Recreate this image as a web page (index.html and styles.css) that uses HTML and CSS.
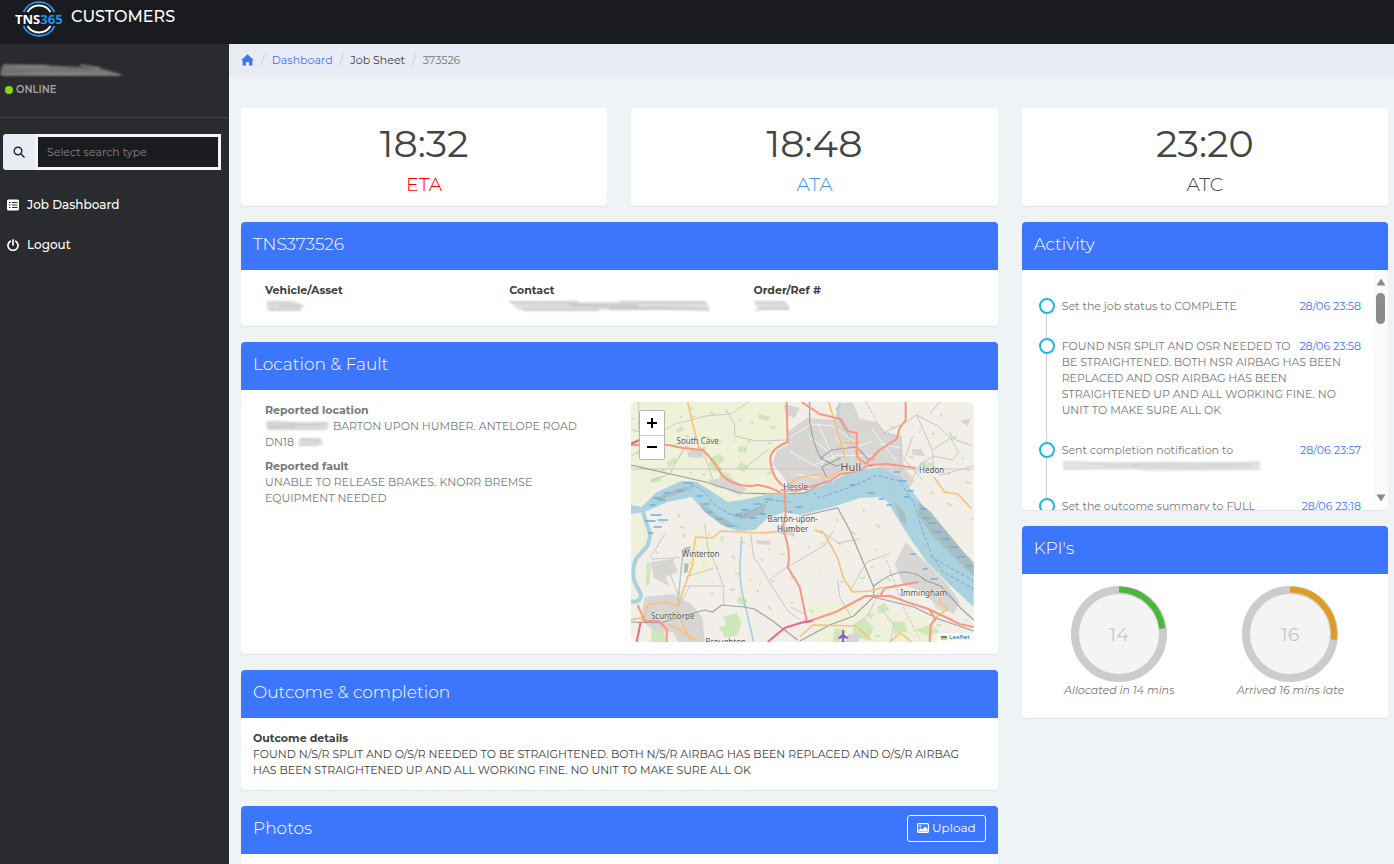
FILE: index.html
```html
<!doctype html>
<html lang="en">
<head>
    <meta charset="UTF-8">
    <meta name="viewport" content="width=device-width, initial-scale=1.0">
    <title>TNS365 Customers - Job Sheet</title>
    <link rel="stylesheet" href="styles.css">
</head>
<body>
    <header class="topbar">
        <svg class="logo" viewBox="0 0 48 38" role="img" aria-label="TNS365">
            <g fill="none" stroke-width="1.900">
                <path d="M8.500 12A17 17 0 0 1 39.500 12M8.500 26A17 17 0 0 0 39.500 26" stroke="#1b95ec"/>
                <path d="M12.500 12A13.500 13.500 0 0 1 35.500 12M12.500 26A13.500 13.500 0 0 0 35.500 26" stroke="#fff"/>
            </g>
            <text x="0" y="24" class="logo-text">TNS<tspan fill="#1b95ec">365</tspan></text>
        </svg>
        <span class="brand">CUSTOMERS</span>
    </header>

    <div class="layout">
        <aside class="sidebar">
            <div class="user">
                <svg class="smudge smudge--dark" width="126" height="14" viewBox="0 0 126 14" preserveAspectRatio="none">
                    <path d="M2 2L40 1L100 4L124 11L60 12L0 11Z" fill="#6e6f71"/>
                    <path d="M3 1L48 2M80 1L100 4M2 11Q60 10 120 11" stroke="#b5b5b5" fill="none"/>
                    <path d="M4 5L70 4M30 8L110 8" stroke="#8a8a8a" fill="none"/>
                </svg>
                <p class="status"><span class="status-dot"></span>ONLINE</p>
            </div>

            <form class="search">
                <button type="button" class="search-btn" aria-label="Search">
                    <svg width="12" height="12" viewBox="0 0 12 12" fill="none" stroke="#1f2a37" stroke-width="1.500"><circle cx="5" cy="5" r="3.800"/><path d="M7.800 7.800L11.500 11.500"/></svg>
                </button>
                <input type="text" class="search-input" placeholder="Select search type" aria-label="Select search type">
            </form>

            <nav class="menu">
                <a href="#" class="menu-link">
                    <svg width="12" height="12" viewBox="0 0 12 12"><rect y="0.500" width="12" height="11" rx="1.500" fill="#fff"/><path d="M2 3.500h1.500M2 6h1.500M2 8.500h1.500M5 3.500h5.500M5 6h5.500M5 8.500h5.500" stroke="#2a2b2e" stroke-width="1.200"/></svg>
                    Job Dashboard
                </a>
                <a href="#" class="menu-link">
                    <svg width="12" height="12" viewBox="0 0 12 12" fill="none" stroke="#fff" stroke-width="1.700" stroke-linecap="round"><path d="M3.300 2.200A5 5 0 1 0 8.700 2.200M6 0.900V6"/></svg>
                    Logout
                </a>
            </nav>
        </aside>

        <main class="main">
            <nav class="breadcrumb">
                <a href="#" class="crumb-home" aria-label="Home">
                    <svg width="13" height="12" viewBox="0 0 13 12" fill="#3b76fd"><path d="M6.500 0.300L13 6.200H11.400V10.700Q11.400 11.500 10.600 11.500H8V8H5V11.500H2.400Q1.600 11.500 1.600 10.700V6.200H0Z"/></svg>
                </a>
                <a href="#">Dashboard</a>
                <span class="crumb-dark">Job Sheet</span>
                <span>373526</span>
            </nav>

            <div class="content">
                <div class="card stat">
                    <div class="stat-time">18:32</div>
                    <div class="stat-label stat-label--eta">ETA</div>
                </div>
                <div class="card stat">
                    <div class="stat-time">18:48</div>
                    <div class="stat-label stat-label--ata">ATA</div>
                </div>
                <div class="card stat">
                    <div class="stat-time">23:20</div>
                    <div class="stat-label">ATC</div>
                </div>

                <div class="column column--wide">
                    <section class="card">
                        <div class="card-header"><h2>TNS373526</h2></div>
                        <div class="card-body row dark">
                            <div class="col">
                                <strong>Vehicle/Asset</strong>
                                <svg class="smudge" width="42" height="10" viewBox="0 0 42 10"><path d="M2 1L32 1L40 5L34 9L2 9Z" fill="#ddd"/><path d="M2 1H28M4 9H36M14 5H36" stroke="#b5b5b5"/></svg>
                            </div>
                            <div class="col">
                                <strong>Contact</strong>
                                <svg class="smudge" width="202" height="10" viewBox="0 0 202 10"><path d="M1 1H198L201 9H10Z" fill="#ddd"/><path d="M0 1H70M110 1H196M14 9H90M100 8Q150 6 200 9M60 4L130 5" stroke="#aaa" fill="none"/></svg>
                            </div>
                            <div class="col">
                                <strong>Order/Ref #</strong>
                                <svg class="smudge" width="38" height="10" viewBox="0 0 38 10"><path d="M1 1H34L37 9H6Z" fill="#ddd"/><path d="M1 1H32M2 9Q14 7 36 8" stroke="#b5b5b5" fill="none"/></svg>
                            </div>
                        </div>
                    </section>

                    <section class="card">
                        <div class="card-header"><h2>Location &amp; Fault</h2></div>
                        <div class="card-body row">
                            <div class="col">
                                <strong>Reported location</strong>
                                <p><svg class="smudge smudge--inline" width="65" height="9" viewBox="0 0 65 9"><path d="M1 1H62L64 8H2Z" fill="#ddd"/><path d="M1 1H18L38 4L64 2M2 8L60 8M2 5L30 5" stroke="#b5b5b5" fill="none"/></svg> BARTON UPON HUMBER. ANTELOPE ROAD<br>DN18 <svg class="smudge smudge--inline" width="27" height="9" viewBox="0 0 27 9"><path d="M3 1L24 1L26 8H1Z" fill="#ddd"/><path d="M4 2L24 4M2 8H22" stroke="#b5b5b5"/></svg></p>
                                <strong>Reported fault</strong>
                                <p>UNABLE TO RELEASE BRAKES. KNORR BREMSE<br>EQUIPMENT NEEDED</p>
                            </div>
                            <div class="col">
                                <div class="map">
                                    <svg class="map-tiles" viewBox="0 0 343 240" preserveAspectRatio="xMidYMid slice">
                                        <rect width="343" height="240" fill="#f2efe9"/>
                                        <!-- fields -->
                                        <path d="M0 0H160L155 45L140 60L150 92L97 100L66 80L30 82L11 105H0Z" fill="#eff1d9"/>
                                        <path d="M0 112L14 110L20 126L17 143L4 160V240H0ZM60 130L80 127L85 160L66 180L55 170ZM176 198L250 205L290 215L320 240H190Z" fill="#f0f1da"/>
                                        <path d="M285 97L343 158V170L300 125Z" fill="#f3f2d6"/>
                                        <g fill="#cfe8ba">
                                            <path d="M66 45l8 3 2 6-9-2zM80 56l9-4 6 5-7 6 5 5-9 2-6-7zM92 70l8 2-4 6-8-2zM36 60l9-5 2 5-9 6zM45 28l6-4 3 4-7 3zM108 44l9 1-2 6-8-1zM128 12l12 3-3 4-10-2zM18 32l7-3 2 4-8 3zM110 60l9 5-6 5-7-4zM4 50l7-3-1 7zM84 38l7 1-3 5zM135 72l7-5-1 6zM20 77l9-3 2 5-9 2z"/>
                                            <path d="M14 196l20 5-2 8-12-3-8 5zM40 208l14-2-3 8-10 2zM92 215l14-4 5 10-4 12-12 3-7-11 8-2zM22 219l10 5 3 16H20zM108 194l9 4-3 6-8-4zM16 160l4 2-1 20-4 2zM55 226l12 2-2 12H52z"/>
                                            <path d="M222 222l12-6 9 10-5 12-15-3zM246 205l8-4 5 7-10 4zM262 219l12 1 3 8-13 5zM303 205l13-5-3 10zM204 226l12 2-5 12h-9zM285 228l16-6 8 8-11 4zM236 211l8 1-4 6zM290 60l14 1-4 4-12-1z"/>
                                        </g>
                                        <g fill="none" stroke="#c9e5b2" stroke-width="2" stroke-dasharray="3 17 5 24 2 11">
                                            <path d="M60 6L145 26M55 34L150 42M10 66L80 73M30 120L150 150M25 150L120 175M80 192L190 170M130 158L205 138M205 117L255 156M210 180L275 168M240 22L343 38M260 46L343 83M300 90L343 118M190 128L270 186M225 238L343 217"/>
                                            <path d="M0 17L75 14M48 112L62 172M90 137L142 210M160 200L195 215M232 108L265 142M310 12L338 69"/>
                                        </g>
                                        <!-- built-up areas -->
                                        <g fill="#d8d6d5">
                                            <path d="M157 30L176 16L205 18L207 2L222 0L229 17L247 20L254 30L271 34L273 66L284 78L276 90L268 76L247 64L219 67L198 80L176 87L158 84L151 72L142 62L146 49L157 43Z"/>
                                            <path d="M78 78L99 75L116 87L109 94L98 88L84 85ZM56 49L76 45L70 56L58 55ZM153 2L169 6L164 16L155 13Z"/>
                                            <path d="M14 195L42 192L61 202L72 216L74 240H48L42 230L25 229L10 219ZM20 160L42 157L47 170L35 175L38 184L23 176Z"/>
                                            <path d="M264 162L275 140L285 151L299 164L318 184L329 200L323 212L306 204L293 190L272 182Z"/>
                                            <path d="M146 124L163 125L164 134L149 132ZM126 138L140 139L139 143L126 142ZM281 47L291 47L294 54L282 53ZM329 19L340 16L337 24ZM217 233L230 230L228 240L215 240Z"/>
                                        </g>
                                        <g fill="#c4e8c5"><path d="M178 28l5 2-1 4-6-1zM191 35l6 2-3 5-4-2zM212 37l3 6-4 2-3-5zM196 58l6-3 3 5-6 1zM179 47l5 3-3 4zM248 48l5 4-6 2zM232 28l6 3-4 4zM215 9l8 3-5 4zM168 75l6-2 1 4zM220 53l4 3-5 3zM257 59l6 2-4 3zM20 208l10 2-6 5zM50 213l6 4-7 2z"/></g>
                                        <g fill="#b8bda6"><path d="M53 146l7-2-1 6-7 2zM54 161l4 1-1 8-4 1z"/></g>
                                        <!-- river -->
                                        <path d="M0 103L11 105L26 90L51 79L66 80L82 90L97 100L111 98L134 93L154 93L174 90L202 79L219 70L249 65L272 76L282 90L292 103L312 126L329 146L343 160V205L316 180L296 160L282 140L269 120L257 100L249 95L229 96L202 105L169 113L154 110L137 116L124 128L107 129L91 123L74 110L61 95L37 100L14 110L0 112Z" fill="#aad3df"/>
                                        <path d="M12 108C16 128 23 128 17 143C13 151 4 153 3 166C1 180 7 184 10 192C11 198 6 201 0 199" stroke="#aad3df" stroke-width="4" fill="none"/>
                                        <path d="M111 135C109 160 108 180 113 197L123 240M52 153L50 172L47 204M207 5C206 22 218 29 222 40M205 8Q211 2 209 0" stroke="#a5cfdf" stroke-width="1.600" fill="none"/>
                                        <path d="M24 97L48 86L62 84L58 88L30 98ZM68 99L87 113L110 126L92 123L73 109ZM101 112L121 108L136 102L132 112L113 117ZM288 100L300 110L343 162V174L322 154L300 132L287 111ZM263 99L274 110L277 124L270 118Z" fill="#a9bec1"/>
                                        <path d="M22 96h7M33 91h7M46 89h7M53 81h9M27 98h8M19 103h6M66 94h6M72 102h7M77 110h5M86 117h6M95 124h7M105 113h6M111 108h8M119 116h7M129 112h6M123 102h7M134 97h6M157 110h5M165 105h7M219 83h6M237 91h7M248 97h5M256 103h5M268 79h8M277 89h6M273 95h6M289 107h7M292 116h7M298 121h8M303 130h8M311 137h8M319 145h8M327 155h7M335 164h7M300 177h7M292 167h5M20 113h11M14 119h11M23 125h8M27 118h10M17 131h6M235 64h7M263 70h6M280 152h5" stroke="#6aaee9" stroke-width="1.300"/>
                                        <path d="M60 83Q74 86 82 101Q97 113 111 116L139 98L160 100M183 90L188 96L223 84L246 73L268 79L283 100L291 126L300 150L311 169L343 187M299 154L343 179" stroke="#7aa7d0" fill="none" stroke-dasharray="4 2"/>
                                        <!-- minor roads -->
                                        <g fill="none" stroke="#cac6ca" stroke-width="1">
                                            <path d="M0 40L22 34L45 22L75 14L100 12L118 0M95 7L104 22V34L126 39L157 38M0 54L20 45L32 29M48 56L55 44L75 56L82 77M8 0V28M53 47L39 72L20 79M113 67L129 54L138 47M0 27L20 34"/>
                                            <path d="M20 157L44 156L35 166M74 122L77 145L86 165L93 185L93 203M120 132L123 155L133 170L143 187L158 210L170 218M55 175L83 166M54 184L94 184M34 132L20 155M38 167L48 195M60 183L48 204M139 178Q155 165 169 158M164 135L150 121"/>
                                            <path d="M254 30L276 20L286 13L307 24L320 36L328 50L322 58L303 54L290 62L282 76M286 13L302 49L303 70M282 34L274 58L292 78M303 47L320 36L342 44M169 158L193 144L203 128M221 186L236 160L260 151M207 178L209 195L220 214M190 129L208 141L229 137M291 62L310 73L343 64M299 12L309 0M250 205L263 223L260 240M174 212L160 205M248 191L238 212L229 221M0 67H343" />
                                        </g>
                                        <path d="M160 35L181 22L202 24L215 33L229 44L242 39M178 34L198 50L190 67M187 21L204 58M241 27L266 59M205 36L239 66M159 49L183 63L207 53L243 54M165 72L187 76M249 42L270 46" fill="none" stroke="#f6f4f2"/>
                                        <path d="M235 0L252 30L270 35V70L260 92M256 158L273 206L289 237" stroke="#cbbad0" fill="none" stroke-dasharray="3 2"/>
                                        <!-- railways -->
                                        <g fill="none" stroke="#a09f9e" stroke-width="1.200">
                                            <path d="M0 63L75 80L110 91L150 92L174 91L195 79M179 0V20Q183 44 190 56L205 64L210 63M190 56L201 48L226 45L237 57L244 57M196 75L191 65L210 56M0 220L30 221L56 213L74 208L82 210L91 203L113 205L124 207L142 219L167 238M171 114L207 106L219 128L243 185V195L223 214L199 223L169 239M243 184Q260 170 274 170Q288 171 294 178L310 184L330 206L343 218M243 195L283 205L308 217L343 229"/>
                                        </g>
                                        <!-- secondary roads -->
                                        <g fill="none" stroke="#fbc077" stroke-width="1.600">
                                            <path d="M57 0L62 22L68 45L74 48M0 218L14 215L17 203L35 200L47 204L54 184L62 163V154L65 135L82 136L90 129L130 131L153 129L171 126M184 128L194 132L207 156L213 177L222 190L240 189L252 185M198 0L207 29L214 55M157 83L170 75L190 72L196 76L218 64M303 75L314 90L327 92L341 107M46 208L60 240M38 222L66 238M314 186L308 200L317 207L302 218M169 235L182 223L226 224L240 238M259 240L270 231L281 240M209 41H230M226 38L229 61"/>
                                        </g>
                                        <!-- main roads -->
                                        <g fill="none" stroke="#f99781" stroke-width="2" stroke-linejoin="round">
                                            <path d="M0 43L38 43L52 46L72 48Q85 60 91 73Q106 87 127 83Q141 85 150 91M156 0L157 40Q137 48 140 60Q141 76 154 85L155 112L152 127Q161 150 157 165L169 185L176 219M150 88L166 89L199 79L210 72L228 69L238 63L257 62L285 66M171 0L189 12L210 17L217 29L226 31L226 55L235 62M235 62L249 48L266 37L269 26L275 18V0M176 220L205 210L235 194L260 194L276 200L298 207L329 222L343 225M250 193L254 186L288 180M298 207L305 217L300 223L299 240M36 240V227L28 219H14L7 203"/>
                                        </g>
                                        <path d="M0 42L9 38M10 220L6 240M137 240L154 226L176 219M169 221L182 219" stroke="#e66a95" stroke-width="2" fill="none"/>
                                        <path d="M211.500 228.500q1-1.500 2 0v4l4 3v1.500l-4-1v3l1.500 1.500h-5l1.500-1.500v-3l-4 1v-1.500l4-3z" fill="#8461c4"/>
                                        <g class="map-labels">
                                            <text x="67" y="42">South Cave</text>
                                            <text x="165" y="88">Hessle</text>
                                            <text x="162" y="120">Barton-upon-</text>
                                            <text x="162" y="130">Humber</text>
                                            <text x="70" y="155">Winterton</text>
                                            <text x="42" y="217">Scunthorpe</text>
                                            <text x="95" y="243">Broughton</text>
                                            <text x="220" y="69" class="map-city">Hull</text>
                                            <text x="301" y="71">Hedon</text>
                                            <text x="293" y="194">Immingham</text>
                                        </g>
                                    </svg>
                                    <div class="map-zoom">
                                        <button type="button" aria-label="Zoom in"><svg width="12" height="12" viewBox="0 0 12 12" stroke="#000" stroke-width="2"><path d="M1 6H11M6 1V11"/></svg></button>
                                        <button type="button" aria-label="Zoom out"><svg width="12" height="12" viewBox="0 0 12 12" stroke="#000" stroke-width="2"><path d="M1 5H11"/></svg></button>
                                    </div>
                                    <a href="#" class="map-credit"><svg width="6" height="4" viewBox="0 0 6 4"><path d="M0 0H6V2H0Z" fill="#4c7be1"/><path d="M0 2H6V4H0Z" fill="#ffd500"/></svg>Leaflet</a>
                                </div>
                            </div>
                        </div>
                    </section>

                    <section class="card">
                        <div class="card-header"><h2>Outcome &amp; completion</h2></div>
                        <div class="card-body dark">
                            <strong>Outcome details</strong>
                            <p>FOUND N/S/R SPLIT AND O/S/R NEEDED TO BE STRAIGHTENED. BOTH N/S/R AIRBAG HAS BEEN REPLACED AND O/S/R AIRBAG<br>HAS BEEN STRAIGHTENED UP AND ALL WORKING FINE. NO UNIT TO MAKE SURE ALL OK</p>
                        </div>
                    </section>

                    <section class="card">
                        <div class="card-header">
                            <h2>Photos</h2>
                            <button type="button" class="upload-btn">
                                <svg width="12" height="10" viewBox="0 0 12 10"><rect x="0.600" y="0.600" width="10.800" height="8.800" rx="1" fill="none" stroke="#fff" stroke-width="1.200"/><circle cx="3.300" cy="3.200" r="1" fill="#fff"/><path d="M1.500 8.500V7L3.500 5L5 6.500L8 3.500L10.500 6V8.500Z" fill="#fff"/></svg>
                                Upload
                            </button>
                        </div>
                        <div class="card-body"></div>
                    </section>
                </div>

                <div class="column">
                    <section class="card">
                        <div class="card-header"><h2>Activity</h2></div>
                        <div class="activity">
                            <ul class="timeline">
                                <li><time>28/06 23:58</time>Set the job status to COMPLETE</li>
                                <li><time>28/06 23:58</time>FOUND NSR SPLIT AND OSR NEEDED TO<br>BE STRAIGHTENED. BOTH NSR AIRBAG HAS BEEN<br>REPLACED AND OSR AIRBAG HAS BEEN<br>STRAIGHTENED UP AND ALL WORKING FINE. NO<br>UNIT TO MAKE SURE ALL OK</li>
                                <li><time>28/06 23:57</time>Sent completion notification to<br><svg class="smudge" width="202" height="10" viewBox="0 0 202 10"><path d="M1 1H198V8H1Z" fill="#e4e4e4"/><path d="M1 1H20L50 4L100 2L160 3L198 1M2 8L70 7L85 9L198 8M70 5L130 6L190 4" stroke="#c5c5c5" fill="none"/></svg></li>
                                <li><time>28/06 23:18</time>Set the outcome summary to FULL</li>
                            </ul>
                            <div class="scrollbar">
                                <svg width="10" height="8" viewBox="0 0 10 8"><path d="M5 0.500L9.500 7.500H0.500Z" fill="#8b8b8b"/></svg>
                                <span class="scrollbar-thumb"></span>
                                <svg width="10" height="8" viewBox="0 0 10 8"><path d="M5 7.500L9.500 0.500H0.500Z" fill="#8b8b8b"/></svg>
                            </div>
                        </div>
                    </section>

                    <section class="card">
                        <div class="card-header"><h2>KPI's</h2></div>
                        <div class="card-body kpis">
                            <div class="kpi">
                                <svg width="96" height="96" viewBox="0 0 96 96">
                                    <circle cx="48" cy="48" r="44" fill="#f4f4f4" stroke="#ccc" stroke-width="8"/>
                                    <path d="M48 3.500A44 44 0 0 1 91.300 42.700" fill="none" stroke="#4cb63c" stroke-width="6"/>
                                    <text x="48" y="55" class="kpi-value">14</text>
                                </svg>
                                <em>Allocated in 14 mins</em>
                            </div>
                            <div class="kpi">
                                <svg width="96" height="96" viewBox="0 0 96 96">
                                    <circle cx="48" cy="48" r="44" fill="#f4f4f4" stroke="#ccc" stroke-width="8"/>
                                    <path d="M48 3.500A44 44.500 0 0 1 91.600 53.600" fill="none" stroke="#de9d21" stroke-width="6"/>
                                    <text x="48" y="55" class="kpi-value">16</text>
                                </svg>
                                <em>Arrived 16 mins late</em>
                            </div>
                        </div>
                    </section>
                </div>
            </div>
        </main>
    </div>
</body>
</html>
```

FILE: styles.css
```css
*,
*::before {
    box-sizing: border-box;
}

body {
    margin: 0;
    height: 100vh;
    display: flex;
    flex-direction: column;
    overflow: hidden;
    font-family: Montserrat, Inter, sans-serif;
    font-size: 11px;
    line-height: 16px;
    color: #76787a;
    background-color: #eff3f6;
}

a {
    color: #3b76fd;
    text-decoration: none;
}

p,
h2,
ul {
    margin: 0;
    padding: 0;
}

button,
input {
    font: inherit;
}

svg {
    flex: none;
}

strong {
    display: block;
    font-weight: 700;
}

.dark {
    color: #404040;
}

/* top bar */
.topbar {
    flex: none;
    height: 44px;
    display: flex;
    align-items: flex-start;
    gap: 8px;
    padding-left: 15px;
    background-color: #1a1b1e;
}

.logo {
    width: 48px;
    height: 38px;
}

.logo-text {
    font-family: "Open Sans", sans-serif;
    font-size: 13px;
    font-weight: 700;
    fill: #fff;
}

.brand {
    padding-top: 5px;
    font-size: 16px;
    font-weight: 500;
    line-height: 24px;
    color: #fff;
}

.layout {
    flex: 1;
    display: flex;
    min-height: 0;
}

/* sidebar */
.sidebar {
    flex: none;
    width: 229px;
    background-color: #2a2b2e;
}

.user {
    height: 74px;
    padding-top: 20px;
    border-bottom: 1px solid #434447;
}

.status {
    display: flex;
    align-items: center;
    gap: 3px;
    padding: 4px 5px;
    font-size: 10px;
    font-weight: 600;
    color: #a3a3a3;
}

.status-dot {
    width: 8px;
    height: 8px;
    border-radius: 50%;
    background-color: #86d916;
}

.search {
    display: flex;
    height: 36px;
    margin: 16px 8px 0 3px;
}

.search-btn {
    width: 32px;
    padding: 0;
    display: flex;
    align-items: center;
    justify-content: center;
    border: 0;
    border-radius: 3px 0 0 3px;
    background-color: #e9ecf5;
}

.search-input {
    flex: 1;
    min-width: 0;
    padding: 0 9px;
    border: 3px solid #f5f6f7;
    background-color: #1a1b1e;
    color: #fff;
}

.search-input::placeholder {
    color: #858585;
}

.menu {
    padding: 15px 7px;
}

.menu-link {
    display: flex;
    align-items: center;
    gap: 8px;
    height: 40px;
    font-size: 12px;
    font-weight: 500;
    color: #fff;
}

/* main */
.main {
    flex: 1;
    min-width: 0;
    overflow: hidden;
}

.breadcrumb {
    display: flex;
    align-items: center;
    height: 32px;
    padding: 0 12px;
    background-color: #e9ecf4;
}

.breadcrumb > * + *::before {
    content: "/";
    padding: 0 7px;
    color: #bfc1c6;
}

.crumb-home {
    display: flex;
}

.crumb-dark {
    color: #404040;
}

.content {
    display: grid;
    grid-template-columns: repeat(3, 1fr);
    gap: 16px 24px;
    padding: 32px 6px 0 12px;
}

.column {
    display: flex;
    flex-direction: column;
    gap: 16px;
    min-width: 0;
}

.column--wide {
    grid-column: span 2;
}

.card {
    background-color: #fff;
    border-radius: 4px;
    box-shadow: 0 1px 1px rgba(0, 0, 0, 0.06);
    overflow: hidden;
}

.card-header {
    display: flex;
    align-items: center;
    justify-content: space-between;
    height: 48px;
    padding: 0 12px 4px;
    color: #fff;
    background-color: #3b76fd;
}

.card-header h2 {
    font-size: 17px;
    font-weight: 300;
    line-height: 24px;
}

.card-body {
    padding: 12px;
}

.row {
    display: flex;
}

.col {
    flex: 1;
    min-width: 0;
    padding: 0 12px;
}

.col p + strong {
    margin-top: 8px;
}

.stat {
    padding: 12px 0 8px;
    text-align: center;
    color: #444;
}

.stat-time {
    font-size: 38px;
    font-weight: 400;
    line-height: 48px;
}

.stat-label {
    margin-top: 4px;
    font-size: 19px;
    font-weight: 300;
    line-height: 26px;
}

.stat-label--eta {
    color: #f00;
}

.stat-label--ata {
    color: #3d96ee;
}

.smudge {
    display: block;
    margin: 3px 0;
    filter: blur(1px);
}

.smudge--dark {
    margin: 0;
}

.smudge--inline {
    display: inline;
    margin: 0;
}

.upload-btn {
    display: flex;
    align-items: center;
    gap: 3px;
    height: 27px;
    padding: 0 9px;
    border: 1px solid #fff;
    border-radius: 3px;
    background: none;
    font-size: 12px;
    color: #fff;
}

/* map */
.map {
    position: relative;
    height: 240px;
    border-radius: 6px;
    overflow: hidden;
}

.map-tiles {
    display: block;
    width: 100%;
    height: 100%;
}

.map-labels {
    font-family: "Noto Sans", sans-serif;
    font-size: 8px;
    text-anchor: middle;
    fill: #555;
    stroke: rgba(255, 255, 255, 0.6);
    stroke-width: 1px;
    paint-order: stroke;
}

.map-city {
    font-size: 11px;
}

.map-zoom {
    position: absolute;
    top: 8px;
    left: 8px;
    border: 1px solid #b5b5ad;
    border-radius: 2px;
    overflow: hidden;
}

.map-zoom button {
    display: flex;
    align-items: center;
    justify-content: center;
    width: 24px;
    height: 24px;
    padding: 0;
    border: 0;
    background-color: #fff;
}

.map-zoom button + button {
    border-top: 1px solid #ccc;
}

.map-credit {
    position: absolute;
    right: 0;
    bottom: 0;
    display: flex;
    align-items: center;
    gap: 2px;
    padding: 0 4px;
    font-size: 6px;
    font-weight: 500;
    line-height: 9px;
    color: #0078a8;
    background-color: rgba(255, 255, 255, 0.8);
}

/* activity */
.activity {
    display: flex;
    height: 240px;
    overflow: hidden;
}

.timeline {
    flex: 1;
    padding: 28px 12px 0 24px;
    list-style: none;
}

.timeline li {
    position: relative;
    padding: 0 0 24px 15px;
    border-left: 1px solid #ccd0dc;
}

.timeline li::before {
    content: "";
    position: absolute;
    top: 0;
    left: -8px;
    width: 16px;
    height: 16px;
    border: 2px solid #23b7e5;
    border-radius: 50%;
    background-color: #fff;
}

.timeline time {
    float: right;
    color: #3b76fd;
}

.scrollbar {
    flex: none;
    width: 15px;
    display: flex;
    flex-direction: column;
    align-items: center;
    padding: 8px 0;
    background-color: #fbfbfb;
}

.scrollbar-thumb {
    width: 9px;
    height: 31px;
    margin: 7px 0 auto;
    border-radius: 5px;
    background-color: #8b8b8b;
}

/* kpis */
.kpis {
    display: flex;
    height: 144px;
}

.kpi {
    flex: 1;
    display: flex;
    flex-direction: column;
    align-items: center;
}

.kpi-value {
    font-size: 19px;
    font-weight: 400;
    text-anchor: middle;
    fill: #c8c8c8;
}
```
